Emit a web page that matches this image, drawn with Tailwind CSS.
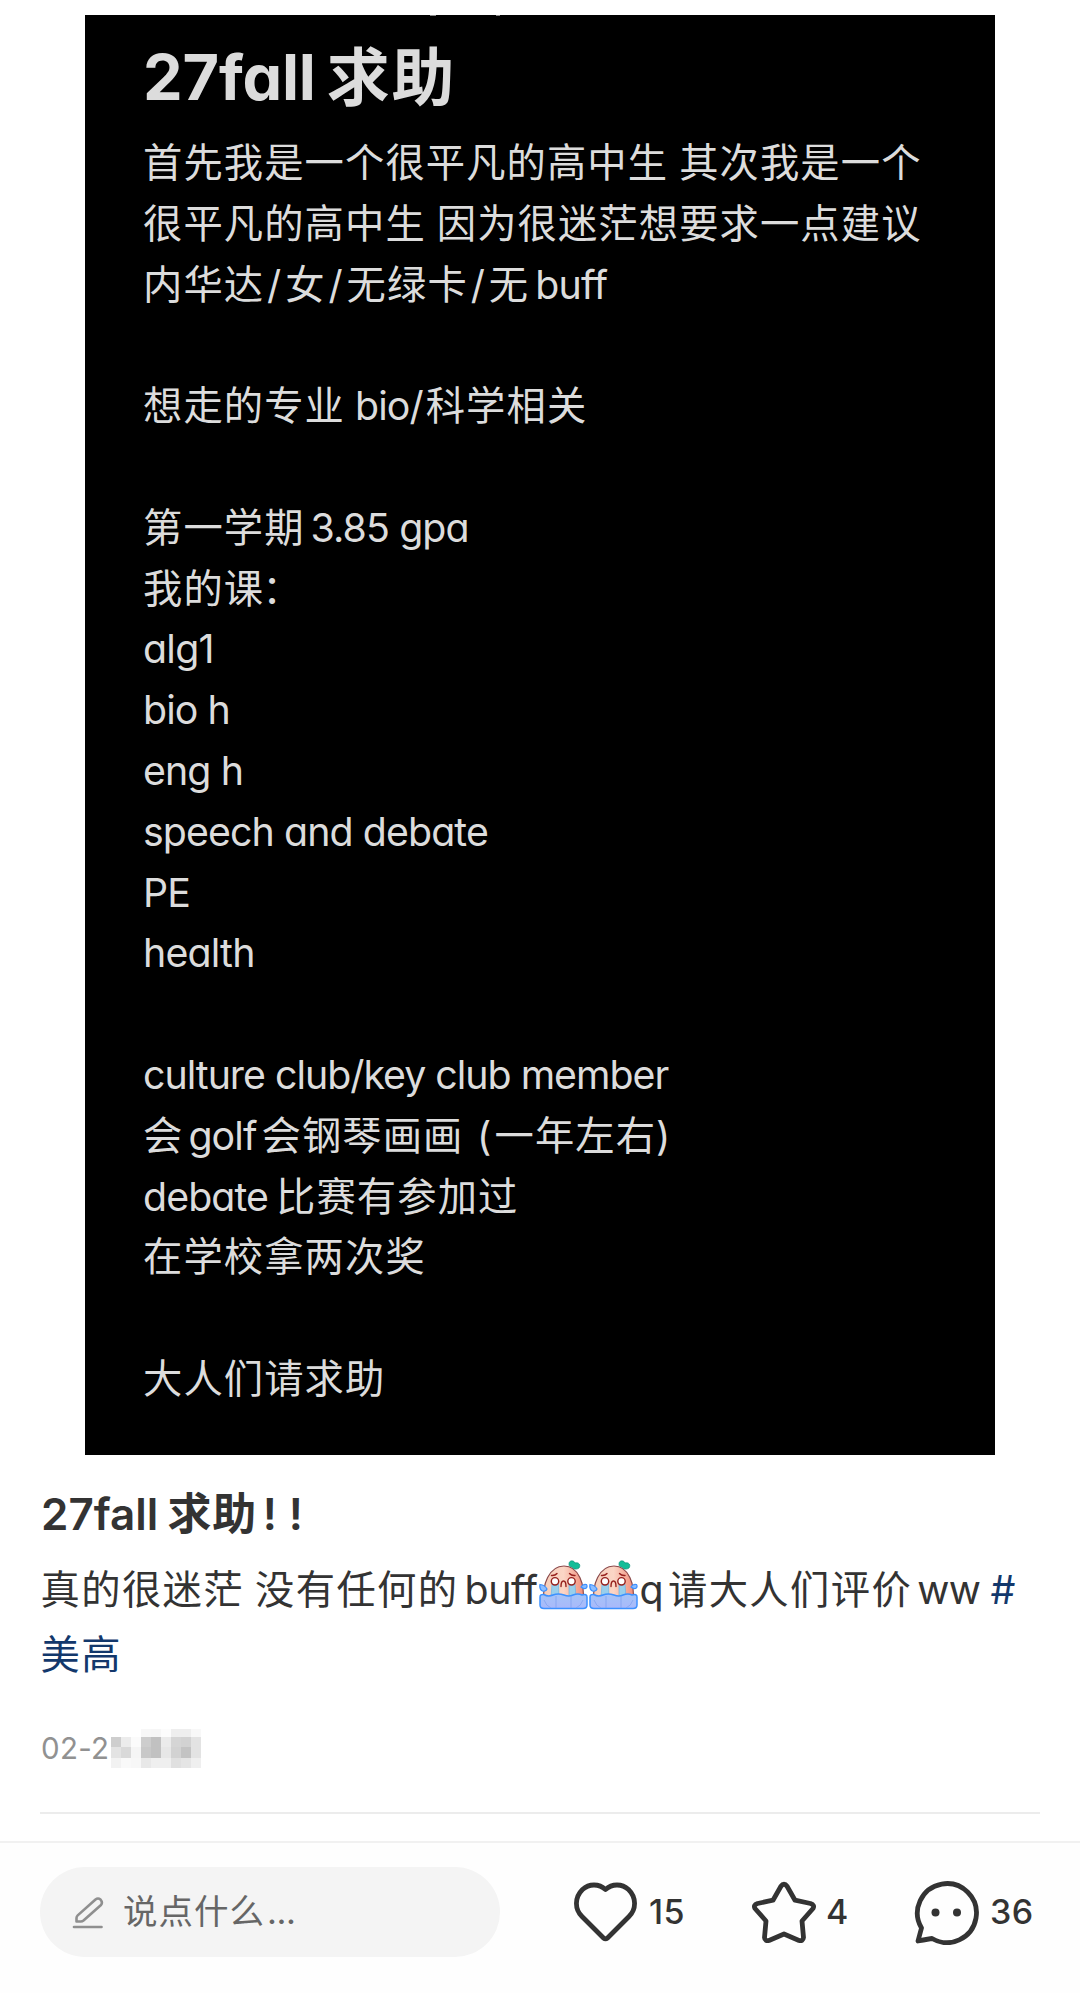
<!DOCTYPE html>
<html lang="zh-CN">
<head>
  <meta charset="UTF-8">
  <title>27fall 求助</title>
  <script src="https://cdn.jsdelivr.net/npm/@tailwindcss/browser@4"></script>
</head>
<body class="bg-white font-['Inter','Noto_Sans_CJK_SC',sans-serif] text-[#333333]">
  <div class="w-[1080px] h-[1993px] flex flex-col overflow-hidden">
    <!-- Note image -->
    <section class="mt-[15px] ml-[84.5px] w-[910.5px] h-[1440px] shrink-0 bg-black pl-[58.5px] text-[#dcdcdc] overflow-hidden [font-feature-settings:'cv11']">
      <div class="flex h-[2px] pl-[287px] gap-[60px]">
        <span class="w-[6px] h-[1px] bg-[#8a8a8a]"></span>
        <span class="w-[4px] h-[1px] bg-[#8a8a8a]"></span>
      </div>
      <h1 class="h-[116px] pt-[15px] text-[63px] leading-[90px] font-bold whitespace-pre"><span class="tracking-[-0.2px]">27fall</span><span class="ml-[11px] tracking-[1.8px]">求助</span></h1>
      <div class="text-[39.3px] leading-[60.8px] tracking-[1.1px] [&>p]:whitespace-pre [&>p]:h-[60.8px]">
        <p>首先我是一个很平凡的高中生<span class="inline-block w-[11px]"></span>其次我是一个</p>
        <p>很平凡的高中生<span class="inline-block w-[11px]"></span>因为很迷茫想要求一点建议</p>
        <p>内华达<span class="inline-block w-[21px] text-center">/</span>女<span class="inline-block w-[21px] text-center">/</span>无绿卡<span class="inline-block w-[21px] text-center">/</span>无<span class="ml-[6px] tracking-[-0.7px]">buff</span></p>
        <p></p>
        <p>想走的专业<span class="ml-[10px] tracking-[-0.9px]">bio/</span><span class="ml-[3px]">科学相关</span></p>
        <p></p>
        <p>第一学期<span class="ml-[6px] tracking-[-0.9px]">3.85 gpa</span></p>
        <p>我的课<span class="-ml-[2px]">：</span></p>
        <p class="tracking-[-0.7px]">alg1</p>
        <p class="tracking-[-0.9px]">bio h</p>
        <p class="tracking-[-0.9px]">eng h</p>
        <p class="tracking-[-0.9px]">speech and debate</p>
        <p class="tracking-[-0.9px]">PE</p>
        <p class="tracking-[-0.8px]">health</p>
        <p></p>
        <p class="tracking-[-1px]">culture club/key club member</p>
        <p>会<span class="ml-[5px] mr-[5px] tracking-[-0.9px]">golf</span>会钢琴画画<span class="inline-block w-[29px] text-right">(</span><span class="ml-[2px]">一年左右</span><span class="inline-block w-[31px]">)</span></p>
        <p><span class="mr-[8px] tracking-[-0.9px]">debate</span>比赛有参加过</p>
        <p>在学校拿两次奖</p>
        <p></p>
        <p>大人们请求助</p>
      </div>
    </section>

    <!-- Post text -->
    <section class="h-[359px] shrink-0 mx-[40px] border-b-2 border-[#ececec]">
      <h2 class="pt-[27px] h-[102px] text-[44px] leading-[64px] font-semibold whitespace-pre"><span class="ml-[1px]">27fall</span><span class="ml-[9px] tracking-[1px] font-bold">求助</span><span class="inline-block w-[25px] text-center">!</span><span class="inline-block w-[27px] text-center">!</span></h2>
      <div class="text-[39.3px] leading-[65px] tracking-[1.4px]">
        <p class="h-[65px] flex whitespace-pre pl-[0.5px]">真的很迷茫<span class="w-[11px]"></span>没有任何的<span class="ml-[6px] tracking-[-0.4px] w-[75px]">buff</span><svg class="w-[50px] h-[50px] mt-[3px] shrink-0" viewBox="0 0 50 50"><use href="#cry"/></svg><svg class="w-[50px] h-[50px] mt-[3px] shrink-0" viewBox="0 0 50 50"><use href="#cry"/></svg><span class="mr-[3px]">q</span>请大人们评价<span class="ml-[5px] tracking-[-0.5px]">ww</span><span class="ml-[10px] text-[#13386c]">#</span></p>
        <p class="text-[#13386c] pl-[0.5px]">美高</p>
      </div>
      <div class="mt-[37px] flex h-[60px]">
        <span class="text-[29.5px] leading-[49px] text-[#919191] w-[70.7px] pl-[1px] tracking-[0.3px]">02-2</span>
        <!-- Mosaic over the rest of the date line -->
        <div class="grid grid-cols-[repeat(9,10px)] grid-rows-[8px_10px_11px_10px] mt-[5px]">
          <i></i><i></i><i></i><i class="bg-[#f7f7f7]"></i><i class="bg-[#f6f6f6]"></i><i class="bg-[#fcfcfc]"></i><i class="bg-[#eeeeee]"></i><i class="bg-[#eeeeee]"></i><i class="bg-[#f8f8f8]"></i>
          <i class="bg-[#cecece]"></i><i class="bg-[#ececec]"></i><i class="bg-[#fbfbfb]"></i><i class="bg-[#cdcdcd]"></i><i class="bg-[#c1c1c1]"></i><i class="bg-[#ebebeb]"></i><i class="bg-[#d5d5d5]"></i><i class="bg-[#d2d2d2]"></i><i class="bg-[#e3e3e3]"></i>
          <i class="bg-[#e3e3e3]"></i><i class="bg-[#d9d9d9]"></i><i class="bg-[#f5f5f5]"></i><i class="bg-[#c8c8c8]"></i><i class="bg-[#c1c1c1]"></i><i class="bg-[#e7e7e7]"></i><i class="bg-[#d2d2d2]"></i><i class="bg-[#c3c3c3]"></i><i class="bg-[#e3e3e3]"></i>
          <i class="bg-[#f2f2f2]"></i><i class="bg-[#f9f9f9]"></i><i class="bg-[#f7f7f7]"></i><i class="bg-[#e8e8e8]"></i><i class="bg-[#efefef]"></i><i class="bg-[#efefef]"></i><i class="bg-[#e0e0e0]"></i><i class="bg-[#e5e5e5]"></i><i class="bg-[#efefef]"></i>
        </div>
      </div>
    </section>

    <!-- Bottom bar -->
    <footer class="mt-[27px] h-[152px] shrink-0 border-t-2 border-[#f1f1f1] bg-[#fefefe] flex items-start pl-[40px] pt-[24px] text-[34px] font-medium">
      <div class="w-[460px] h-[90px] rounded-full bg-[#f4f4f4] flex items-center pl-[32px] text-[#666666] font-normal">
        <svg class="w-[33px] h-[33px] text-[#8f8f8f]" viewBox="0 0 33 33" fill="none" stroke="currentColor" stroke-width="2.6" stroke-linecap="round" stroke-linejoin="round">
          <path d="M4.5 25.5V22Q4.5 20.5 5.7 19.4L23.5 3.5Q26 1.5 28.5 3.5Q31 6.5 29 9L11.5 24.5Q10.3 25.5 8.8 25.5Z"/>
          <path d="M2 31H29.5"/>
        </svg>
        <span class="ml-[18px] text-[34.5px] tracking-[1px]">说点什么</span><span class="ml-[2px] text-[34.5px] tracking-[-0.5px]">...</span>
      </div>
      <div class="ml-[73px] flex items-center h-[90px] w-[179px]">
        <svg class="w-[65px] h-[60px]" viewBox="0 0 65 60" fill="none" stroke="#333333" stroke-width="4.8" stroke-linejoin="round">
          <path d="M32.5 7.500C26 1.500 16 1.500 9.500 7.500C1.500 15.500 1.500 27 9 34.500L30.500 56Q32.500 57.500 34.500 56L56 34.500C63.500 27 63.500 15.500 55.500 7.500C49 1.500 39 1.500 32.500 7.500Z"/>
        </svg>
        <span class="ml-[11px] pb-[2px] tracking-[0.5px]">15</span>
      </div>
      <div class="flex items-center h-[90px] w-[162px]">
        <svg class="w-[64px] h-[62px]" viewBox="0 0 64 62" fill="none" stroke="#333333" stroke-width="4.8" stroke-linejoin="round">
          <path d="M28.8 5.5Q32 1 35.2 5.5L43 19.2L58.5 22.5Q63 24 61 27.5L50 40L51.5 56.5Q51 60.5 47 59.5L32 53L17 59.5Q13 60.5 12.5 56.5L14 40L3 27.5Q1 24 5.5 22.5L21 19.2Z"/>
        </svg>
        <span class="ml-[10px] pb-[2px]">4</span>
      </div>
      <div class="flex items-center h-[90px]">
        <svg class="w-[65px] h-[65px]" viewBox="0 0 65 65" fill="none" stroke="#333333" stroke-width="4.8" stroke-linejoin="round">
          <path d="M7.5 48A29.5 29.5 0 1 1 18 58.5Q16 58.6 4 61Z"/>
          <circle cx="21.5" cy="32.5" r="4" fill="#333333" stroke="none"/>
          <circle cx="43" cy="32.5" r="4" fill="#333333" stroke="none"/>
        </svg>
        <span class="ml-[11px] pb-[2px] tracking-[0.5px]">36</span>
      </div>
    </footer>
  </div>

  <!-- Crying sticker used twice in the post text -->
  <svg class="absolute w-0 h-0">
    <defs>
      <linearGradient id="skin" x1="0" x2="1"><stop offset="0" stop-color="#f7cdb8"/><stop offset=".5" stop-color="#fbd6c6"/><stop offset="1" stop-color="#f28f7c"/></linearGradient>
      <linearGradient id="water" x1="0" x2="0" y1="0" y2="1"><stop offset="0" stop-color="#a5c4f6"/><stop offset="1" stop-color="#a9b8fb"/></linearGradient>
    </defs>
    <symbol id="cry" viewBox="0 0 50 50">
      <path d="M5 41C3 25 10 6 25 6S46 25 44 41Z" fill="url(#skin)" stroke="#8b4a4c" stroke-width="1.2"/>
      <path d="M30 4C30 0 35 0 36 3C40 2 42 5 40 8C37 10 34 9 33 7C31 7 30 6 30 4Z" fill="#12bd98" stroke="#0b8f79" stroke-width=".7"/>
      <path d="M13 24H19.5L20 38H12ZM30 24H36L37 38H30Z" fill="#98cfec" stroke="#5db1ea" stroke-width=".6"/>
      <circle cx="16" cy="21.3" r="3.7" fill="#fff" stroke="#951f1c" stroke-width="1.4"/>
      <circle cx="32.5" cy="21.3" r="3.7" fill="#fff" stroke="#951f1c" stroke-width="1.4"/>
      <path d="M12.5 15.5Q16 15.8 18 13.5M36 15.5Q32.5 15.8 30.5 13.5M22 26.5Q22 21 24.5 21T27 26.5" fill="none" stroke="#951f1c" stroke-width="1.4" stroke-linecap="round"/>
      <path d="M1 37Q1 34 5 34.5Q9 37 14 35Q19 33 25 35Q30 37 34 35Q39 33 43 35Q48 33.5 48 37V45Q48 48.5 44 48.5H5Q1 48.5 1 45Z" fill="url(#water)" stroke="#3d91ff" stroke-width="1.5"/>
      <path d="M5 40Q7 46 12 48M44 40Q42 46 37 48M17 36V48M32 36V48" stroke="#7c9fee" stroke-width=".7" fill="none"/>
      <path d="M1 24.5Q6 25 8 29Q7 32 3.5 31Q0 29 1 24.5ZM42 27Q44 23.5 47.5 24.5Q49 27 46.5 28.5Q44 29 42 27Z" fill="#8dbdff" stroke="#3d91ff" stroke-width="1.2"/>
    </symbol>
  </svg>
</body>
</html>
